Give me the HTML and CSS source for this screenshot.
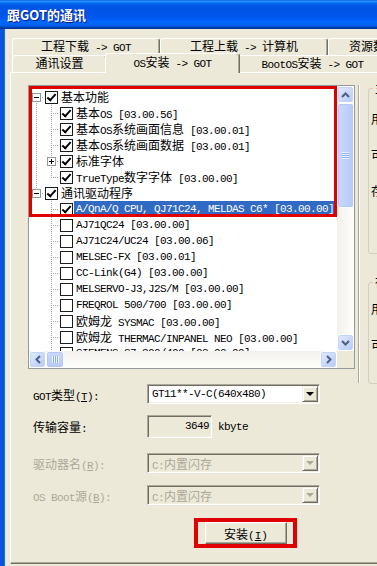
FILE: index.html
```html
<!DOCTYPE html>
<html lang="zh-CN">
<head>
    <meta charset="UTF-8">
    <meta name="viewport" content="width=device-width, initial-scale=1.0">
    <title>跟GOT的通讯</title>
    <link rel="stylesheet" href="styles.css">
</head>
<body>
<div class="window">
    <div class="titlebar">跟GOT的通讯</div>

    <div class="client">
        <!-- two rows of tabs, the front row holds the selected page -->
        <div class="tabs">
            <div class="tab-row">
                <div class="tab tab-dl"><span class="zh">工程下载</span> -&gt; GOT</div>
                <div class="tab tab-ul"><span class="zh">工程上载</span> -&gt; <span class="zh">计算机</span></div>
                <div class="tab tab-res"><span class="zh">资源数据收集</span></div>
            </div>
            <div class="tab-row">
                <div class="tab tab-comm"><span class="zh">通讯设置</span></div>
                <div class="tab tab-os active">OS<span class="zh">安装</span> -&gt; GOT</div>
                <div class="tab tab-boot">BootOS<span class="zh">安装</span> -&gt; GOT</div>
            </div>
        </div>

        <div class="panel">
            <div class="main">
                <div class="tree">
                    <div class="tree-list">
                        <div class="node"><i class="ln first"><b class="box"></b></i><i class="cb on"></i><span class="lbl"><span class="zh">基本功能</span></span></div>
                        <div class="node"><i class="ln pipe"></i><i class="ln tee"></i><i class="cb on"></i><span class="lbl"><span class="zh">基本</span>OS [03.00.56]</span></div>
                        <div class="node"><i class="ln pipe"></i><i class="ln tee"></i><i class="cb on"></i><span class="lbl"><span class="zh">基本</span>OS<span class="zh">系统画面信息</span> [03.00.01]</span></div>
                        <div class="node"><i class="ln pipe"></i><i class="ln tee"></i><i class="cb on"></i><span class="lbl"><span class="zh">基本</span>OS<span class="zh">系统画面数据</span> [03.00.01]</span></div>
                        <div class="node"><i class="ln pipe"></i><i class="ln tee"><b class="box closed"></b></i><i class="cb on"></i><span class="lbl"><span class="zh">标准字体</span></span></div>
                        <div class="node"><i class="ln pipe"></i><i class="ln elbow"></i><i class="cb on"></i><span class="lbl">TrueType<span class="zh">数字字体</span> [03.00.00]</span></div>
                        <div class="node"><i class="ln elbow"><b class="box"></b></i><i class="cb on"></i><span class="lbl"><span class="zh">通讯驱动程序</span></span></div>
                        <div class="node"><i class="ln"></i><i class="ln tee"></i><i class="cb on"></i><span class="lbl selected">A/QnA/Q CPU, QJ71C24, MELDAS C6* [03.00.00]</span></div>
                        <div class="node"><i class="ln"></i><i class="ln tee"></i><i class="cb"></i><span class="lbl">AJ71QC24 [03.00.00]</span></div>
                        <div class="node"><i class="ln"></i><i class="ln tee"></i><i class="cb"></i><span class="lbl">AJ71C24/UC24 [03.00.06]</span></div>
                        <div class="node"><i class="ln"></i><i class="ln tee"></i><i class="cb"></i><span class="lbl">MELSEC-FX [03.00.01]</span></div>
                        <div class="node"><i class="ln"></i><i class="ln tee"></i><i class="cb"></i><span class="lbl">CC-Link(G4) [03.00.00]</span></div>
                        <div class="node"><i class="ln"></i><i class="ln tee"></i><i class="cb"></i><span class="lbl">MELSERVO-J3,J2S/M [03.00.00]</span></div>
                        <div class="node"><i class="ln"></i><i class="ln tee"></i><i class="cb"></i><span class="lbl">FREQROL 500/700 [03.00.00]</span></div>
                        <div class="node"><i class="ln"></i><i class="ln tee"></i><i class="cb"></i><span class="lbl"><span class="zh">欧姆龙</span> SYSMAC [03.00.00]</span></div>
                        <div class="node"><i class="ln"></i><i class="ln tee"></i><i class="cb"></i><span class="lbl"><span class="zh">欧姆龙</span> THERMAC/INPANEL NEO [03.00.00]</span></div>
                        <div class="node"><i class="ln"></i><i class="ln tee"></i><i class="cb"></i><span class="lbl">SIEMENS S7-300/400 [03.00.00]</span></div>
                        <!-- red annotation frame -->
                        <div class="mark"></div>
                    </div>

                    <div class="vscroll">
                        <div class="sb-btn">
                            <svg width="9" height="6" viewBox="0 0 9 6"><path d="M1 5 L4.5 1.5 L8 5" fill="none" stroke="#4D6185" stroke-width="2"/></svg>
                        </div>
                        <div class="sb-thumb v"><span class="grip"></span></div>
                        <div class="sb-track"></div>
                        <div class="sb-btn">
                            <svg width="9" height="6" viewBox="0 0 9 6"><path d="M1 1 L4.5 4.5 L8 1" fill="none" stroke="#4D6185" stroke-width="2"/></svg>
                        </div>
                    </div>
                    <div class="hscroll">
                        <div class="sb-btn">
                            <svg width="6" height="9" viewBox="0 0 6 9"><path d="M5 1 L1.5 4.5 L5 8" fill="none" stroke="#4D6185" stroke-width="2"/></svg>
                        </div>
                        <div class="sb-thumb h"><span class="grip"></span></div>
                        <div class="sb-track"></div>
                        <div class="sb-btn">
                            <svg width="6" height="9" viewBox="0 0 6 9"><path d="M1 1 L4.5 4.5 L1 8" fill="none" stroke="#4D6185" stroke-width="2"/></svg>
                        </div>
                    </div>
                    <div class="corner"></div>
                </div>

                <div class="field-row row-type">
                    <label>GOT<span class="zh">类型</span>(<u>T</u>):</label>
                    <div class="combo"><span class="value">GT11**-V-C(640x480)</span><span class="drop"></span></div>
                </div>
                <div class="field-row row-size">
                    <label><span class="zh">传输容量</span>:</label>
                    <div class="readout">3649</div>
                    <span class="unit">kbyte</span>
                </div>
                <div class="field-row row-drive disabled">
                    <label><span class="zh">驱动器名</span>(<u>R</u>):</label>
                    <div class="combo"><span class="value">C:<span class="zh">内置闪存</span></span><span class="drop"></span></div>
                </div>
                <div class="field-row row-boot disabled">
                    <label>OS Boot<span class="zh">源</span>(<u>B</u>):</label>
                    <div class="combo"><span class="value">C:<span class="zh">内置闪存</span></span><span class="drop"></span></div>
                </div>

                <div class="actions">
                    <span class="callout"><button class="btn"><span class="zh">安装</span>(<u>I</u>)</button></span>
                </div>
            </div>

            <div class="side">
                <div class="group group-main">
                    <span class="legend"><span class="zh">主存储器</span></span>
                    <p class="zh">用户区域:</p>
                    <p class="zh">可用空间:</p>
                    <p class="zh">存储容量:</p>
                </div>
                <div class="group group-card">
                    <span class="legend"><span class="zh">存储卡</span></span>
                    <p class="zh">用户区域:</p>
                    <p class="zh">可用空间:</p>
                </div>
            </div>
        </div>
    </div>
</div>
</body>
</html>
```

FILE: styles.css
```css
body {
    margin: 0;
    height: 566px;
    overflow: hidden;
    background: #ECE9D8;
    color: #000;
    font-family: "Liberation Mono", "Noto Sans CJK SC", monospace;
    font-size: 11px;
    letter-spacing: -0.6px;
}
.zh {
    font-family: "Noto Sans CJK SC", sans-serif;
    font-size: 12px;
    letter-spacing: 0;
}
.window {
    width: 520px;
}

/* XP title bar */
.titlebar {
    height: 29px;
    padding-left: 7px;
    display: flex;
    align-items: center;
    background: linear-gradient(to bottom, #0058EE 0%, #3593FF 4%, #288EFF 6%, #127DFF 8%, #036FFC 10%, #0262EE 14%, #0057E5 20%, #0054E3 24%, #0055EB 56%, #005BF5 66%, #026AFE 76%, #0062EF 86%, #0052D6 92%, #0040AB 94%, #003092 100%);
    color: #fff;
    font-family: "Noto Sans CJK SC", sans-serif;
    font-size: 13px;
    font-weight: bold;
    letter-spacing: 0;
    text-shadow: 1px 1px #0A1883;
}
.client {
    height: 537px;
    padding: 9px 0 0 6px;
    border-left: 4px solid #0855DD;
    box-shadow: inset 1px 0 #166AEE;
}

/* tabs */
.tabs {
    margin-left: 2px;
}
.tab-row {
    display: flex;
    height: 17px;
}
.tab {
    flex: none;
    box-sizing: border-box;
    height: 17px;
    border-top: 1px solid #fff;
    border-left: 1px solid #fff;
    border-right: 1px solid #716F64;
    border-radius: 3px 3px 0 0;
    box-shadow: inset -1px 0 #ACA899;
    text-align: center;
    line-height: 13px;
    white-space: nowrap;
}
.tab-dl { width: 148px; }
.tab-ul { width: 168px; }
.tab-res { padding: 0 20px; }
.tab-comm { width: 95px; }
.tab-os { width: 131px; }
.tab-boot { width: 149px; }
.tab.active {
    position: relative;
    z-index: 1;
    width: 135px;
    height: 20px;
    margin: -2px -2px -1px;
    padding-top: 1px;
    background: #ECE9D8;
}

/* tab page */
.panel {
    display: flex;
    width: 510px;
    height: 492px;
    box-sizing: border-box;
    border-top: 1px solid #fff;
    border-left: 1px solid #fff;
    border-bottom: 1px solid #716F64;
    box-shadow: inset 0 -1px #ACA899;
}
.main {
    flex: none;
    width: 347px;
    box-sizing: border-box;
    padding: 12px 0 0 17px;
}

/* tree view */
.tree {
    width: 327px;
    height: 284px;
    box-sizing: border-box;
    border: 1px solid #919B9C;
    background: #fff;
    display: grid;
    grid-template-columns: 1fr 17px;
    grid-template-rows: 1fr 17px;
}
.tree-list {
    position: relative;
    overflow: hidden;
    padding-top: 3px;
}
.node {
    display: flex;
    align-items: center;
    height: 16px;
}
.ln {
    flex: none;
    width: 15px;
    height: 16px;
    display: flex;
    align-items: center;
    justify-content: center;
    background-repeat: no-repeat;
}
.pipe {
    background-image: repeating-linear-gradient(to bottom, #A0A0A0 0 1px, transparent 1px 2px);
    background-position: 7px 0;
    background-size: 1px 16px;
}
.tee {
    background-image: repeating-linear-gradient(to bottom, #A0A0A0 0 1px, transparent 1px 2px), repeating-linear-gradient(to right, #A0A0A0 0 1px, transparent 1px 2px);
    background-position: 7px 0, 9px 8px;
    background-size: 1px 16px, 6px 1px;
}
.elbow {
    background-image: repeating-linear-gradient(to bottom, #A0A0A0 0 1px, transparent 1px 2px), repeating-linear-gradient(to right, #A0A0A0 0 1px, transparent 1px 2px);
    background-position: 7px 0, 9px 8px;
    background-size: 1px 9px, 6px 1px;
}
.first {
    background-image: repeating-linear-gradient(to bottom, #A0A0A0 0 1px, transparent 1px 2px), repeating-linear-gradient(to right, #A0A0A0 0 1px, transparent 1px 2px);
    background-position: 7px 8px, 9px 8px;
    background-size: 1px 8px, 6px 1px;
}
.box {
    width: 9px;
    height: 9px;
    box-sizing: border-box;
    margin-left: -1px;
    border: 1px solid #919B9C;
    background: #fff linear-gradient(#000, #000) center / 5px 1px no-repeat;
}
.box.closed {
    background-image: linear-gradient(#000, #000), linear-gradient(#000, #000);
    background-size: 5px 1px, 1px 5px;
}
.cb {
    flex: none;
    width: 13px;
    height: 13px;
    box-sizing: border-box;
    margin-left: 1px;
    border: 1px solid #1C1C1C;
    background: #fff;
    display: flex;
    align-items: center;
    justify-content: center;
}
.cb.on::after {
    content: "";
    width: 3px;
    height: 7px;
    border: solid #000;
    border-width: 0 2px 2px 0;
    transform: translateY(-1px) rotate(42deg);
}
.lbl {
    margin-left: 1px;
    padding: 0 2px;
    height: 16px;
    line-height: 16px;
    white-space: nowrap;
}
.lbl.selected {
    background: #316AC5;
    color: #fff;
}
.mark {
    position: absolute;
    left: 0;
    top: 0;
    width: 308px;
    height: 131px;
    box-sizing: border-box;
    border: 3px solid #E00000;
}

/* XP scroll bars */
.vscroll,
.hscroll {
    display: flex;
    background: linear-gradient(to right, #F3F1EC, #FEFEFB);
}
.vscroll {
    flex-direction: column;
}
.hscroll {
    background: linear-gradient(to bottom, #F3F1EC, #FEFEFB);
}
.sb-btn {
    flex: none;
    width: 17px;
    height: 17px;
    box-sizing: border-box;
    border: 1px solid #fff;
    border-radius: 3px;
    background: linear-gradient(135deg, #E3EBFE, #B6C9F6);
    box-shadow: inset 0 0 0 1px #C3D4FB;
    display: flex;
    align-items: center;
    justify-content: center;
}
.sb-thumb {
    flex: none;
    box-sizing: border-box;
    border: 1px solid #fff;
    border-radius: 3px;
    background: linear-gradient(to right, #CAD9FC, #B7CAF7);
    box-shadow: inset 0 0 0 1px #B4C8F6;
    display: flex;
    align-items: center;
    justify-content: center;
}
.sb-thumb.v {
    height: 105px;
}
.sb-thumb.h {
    width: 18px;
    background: linear-gradient(to bottom, #CAD9FC, #B7CAF7);
}
.sb-thumb.v .grip {
    width: 7px;
    height: 7px;
    background: repeating-linear-gradient(to bottom, #EEF4FE 0 1px, #8CB0F8 1px 2px);
}
.sb-thumb.h .grip {
    width: 7px;
    height: 7px;
    background: repeating-linear-gradient(to right, #EEF4FE 0 1px, #8CB0F8 1px 2px);
}
.sb-track {
    flex: 1;
}
.corner {
    background: #ECE9D8;
}

/* form below the tree */
.field-row {
    display: flex;
    align-items: center;
    height: 20px;
    margin-left: 5px;
    white-space: nowrap;
}
.field-row label {
    flex: none;
    width: 114px;
}
.row-type { margin-top: 15px; }
.row-size { margin-top: 11px; height: 23px; }
.row-drive { margin-top: 15px; }
.row-boot { margin-top: 12px; }
.disabled {
    color: #ACA899;
}
.combo,
.readout {
    box-sizing: border-box;
    height: 100%;
    border: 1px solid;
    border-color: #ACA899 #fff #fff #ACA899;
    box-shadow: inset 1px 1px #716F64, inset -1px -1px #F1EFE2;
}
.combo {
    width: 173px;
    padding: 1px;
    display: flex;
    align-items: center;
    background: #fff;
}
.combo .value {
    flex: 1;
    padding-left: 3px;
}
.disabled .combo {
    background: #ECE9D8;
}
.drop {
    width: 16px;
    height: 16px;
    box-sizing: border-box;
    border: 1px solid;
    border-color: #F1EFE2 #716F64 #716F64 #F1EFE2;
    box-shadow: inset 1px 1px #fff, inset -1px -1px #ACA899;
    background: #ECE9D8;
    display: flex;
    align-items: center;
    justify-content: center;
}
.drop::after {
    content: "";
    border-top: 4px solid #000;
    border-left: 4px solid transparent;
    border-right: 4px solid transparent;
}
.disabled .drop::after {
    border-top-color: #ACA899;
}
.readout {
    width: 65px;
    padding-right: 2px;
    line-height: 21px;
    text-align: right;
    background: #ECE9D8;
}
.unit {
    margin-left: 6px;
}

.actions {
    margin: 13px 0 0 166px;
}
.callout {
    display: inline-block;
    padding: 0 6px 0 7px;
    border: 4px solid #E00000;
}
.btn {
    display: block;
    width: 82px;
    height: 22px;
    margin: 0;
    padding: 0;
    background: #ECE9D8;
    border: 1px solid;
    border-color: #fff #716F64 #716F64 #fff;
    box-shadow: inset -1px -1px #ACA899, inset 1px 1px #F1EFE2;
    font: inherit;
    color: #000;
}

/* group boxes on the right, cut off by the window edge */
.side {
    flex: 1;
    height: 298px;
    margin-top: 12px;
    padding-left: 9px;
    border-left: 1px solid #ACA899;
    box-shadow: inset 1px 0 #fff;
}
.group {
    box-sizing: border-box;
    border: 1px solid #D0D0BF;
    border-radius: 3px;
    padding-left: 2px;
}
.group-main {
    height: 166px;
    margin-top: 3px;
}
.group-card {
    height: 102px;
    margin-top: 28px;
}
.legend {
    display: block;
    width: max-content;
    margin: -8px 0 0 2px;
    padding: 0 2px;
    line-height: 14px;
    background: #ECE9D8;
}
.group p {
    margin: 20px 0 0;
    line-height: 16px;
}
.group-main .legend + p {
    margin-top: 14px;
}
.group-card .legend + p {
    margin-top: 10px;
}
```
